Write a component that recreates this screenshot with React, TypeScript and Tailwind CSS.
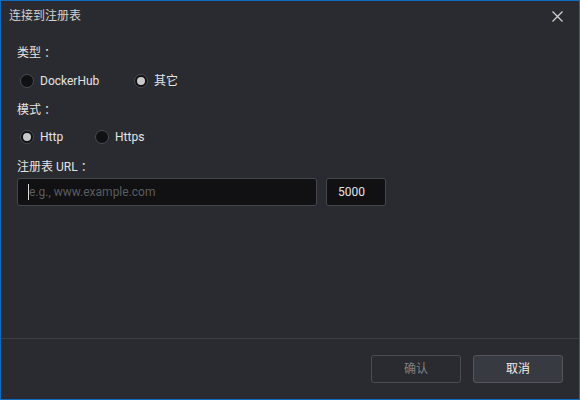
const Colon = () => (
  <span className="leading-none" style={{ fontFamily: '"Noto Sans CJK TC", sans-serif' }}>
    ：
  </span>
);

const Label = ({ children, className = "" }: { children: React.ReactNode; className?: string }) => (
  <div className={`flex items-center h-[18px] text-[12px] text-[#e4e4e4] ${className}`}>{children}</div>
);

const Radio = ({ checked, label }: { checked?: boolean; label: string }) => (
  <label className="flex items-center gap-[6px]">
    <span className="w-[14px] h-[14px] rounded-full bg-[#111113] border border-[#4a4b50] flex items-center justify-center">
      {checked && <span className="w-[8px] h-[8px] rounded-full bg-[#c9c9c9]" />}
    </span>
    <span className="text-[12px] text-[#e4e4e4]">{label}</span>
  </label>
);

export default function App() {
  return (
    <div
      className="w-[580px] h-[400px] bg-[#2a2b30] border border-[#0b6bc0] flex flex-col"
      style={{ fontFamily: 'Roboto, "Noto Sans CJK SC", sans-serif' }}
    >
      {/* Title bar */}
      <div className="h-[30px] flex items-center justify-between pl-[8px] pr-[16px] shrink-0">
        <span className="text-[12px] text-[#d2d2d2]">连接到注册表</span>
        <svg width="11" height="11" viewBox="0 0 11 11" className="text-[#d0d0d0]">
          <path d="M0.5 0.5L10.5 10.5M10.5 0.5L0.5 10.5" stroke="currentColor" strokeWidth="1.3" />
        </svg>
      </div>

      {/* Body */}
      <div className="flex-1 pl-[16px] pt-[13px]">
        <Label>
          类型<Colon />
        </Label>
        <div className="flex items-center mt-[10px] h-[18px] pl-[3px]">
          <div className="w-[114px]">
            <Radio label="DockerHub" />
          </div>
          <Radio checked label="其它" />
        </div>

        <Label className="mt-[11px]">
          模式<Colon />
        </Label>
        <div className="flex items-center mt-[9px] h-[18px] pl-[3px]">
          <div className="w-[75px]">
            <Radio checked label="Http" />
          </div>
          <Radio label="Https" />
        </div>

        <Label className="mt-[12px]">
          注册表 URL<Colon />
        </Label>
        <div className="flex gap-[9px] mt-[2px]">
          <div className="w-[300px] h-[28px] bg-[#111113] border border-[#46474c] rounded-[3px] flex items-center px-[10px]">
            <span className="w-px h-[16px] bg-[#d8d8d8]" />
            <span className="text-[12px] text-[#5b5c60]">e.g., www.example.com</span>
          </div>
          <div className="w-[60px] h-[28px] bg-[#111113] border border-[#46474c] rounded-[3px] flex items-center px-[11px]">
            <span className="text-[12px] text-[#e4e4e4]">5000</span>
          </div>
        </div>
      </div>

      {/* Footer */}
      <div className="h-[61px] border-t border-[#3e3f44] flex items-center justify-end gap-[12px] pr-[16px] shrink-0">
        <button className="w-[90px] h-[28px] rounded-[3px] border border-[#4c4d52] text-[12px] text-[#808185] bg-transparent">
          确认
        </button>
        <button className="w-[90px] h-[28px] rounded-[3px] border border-[#55565b] text-[12px] text-[#f0f0f0] bg-[#383a41]">
          取消
        </button>
      </div>
    </div>
  );
}
